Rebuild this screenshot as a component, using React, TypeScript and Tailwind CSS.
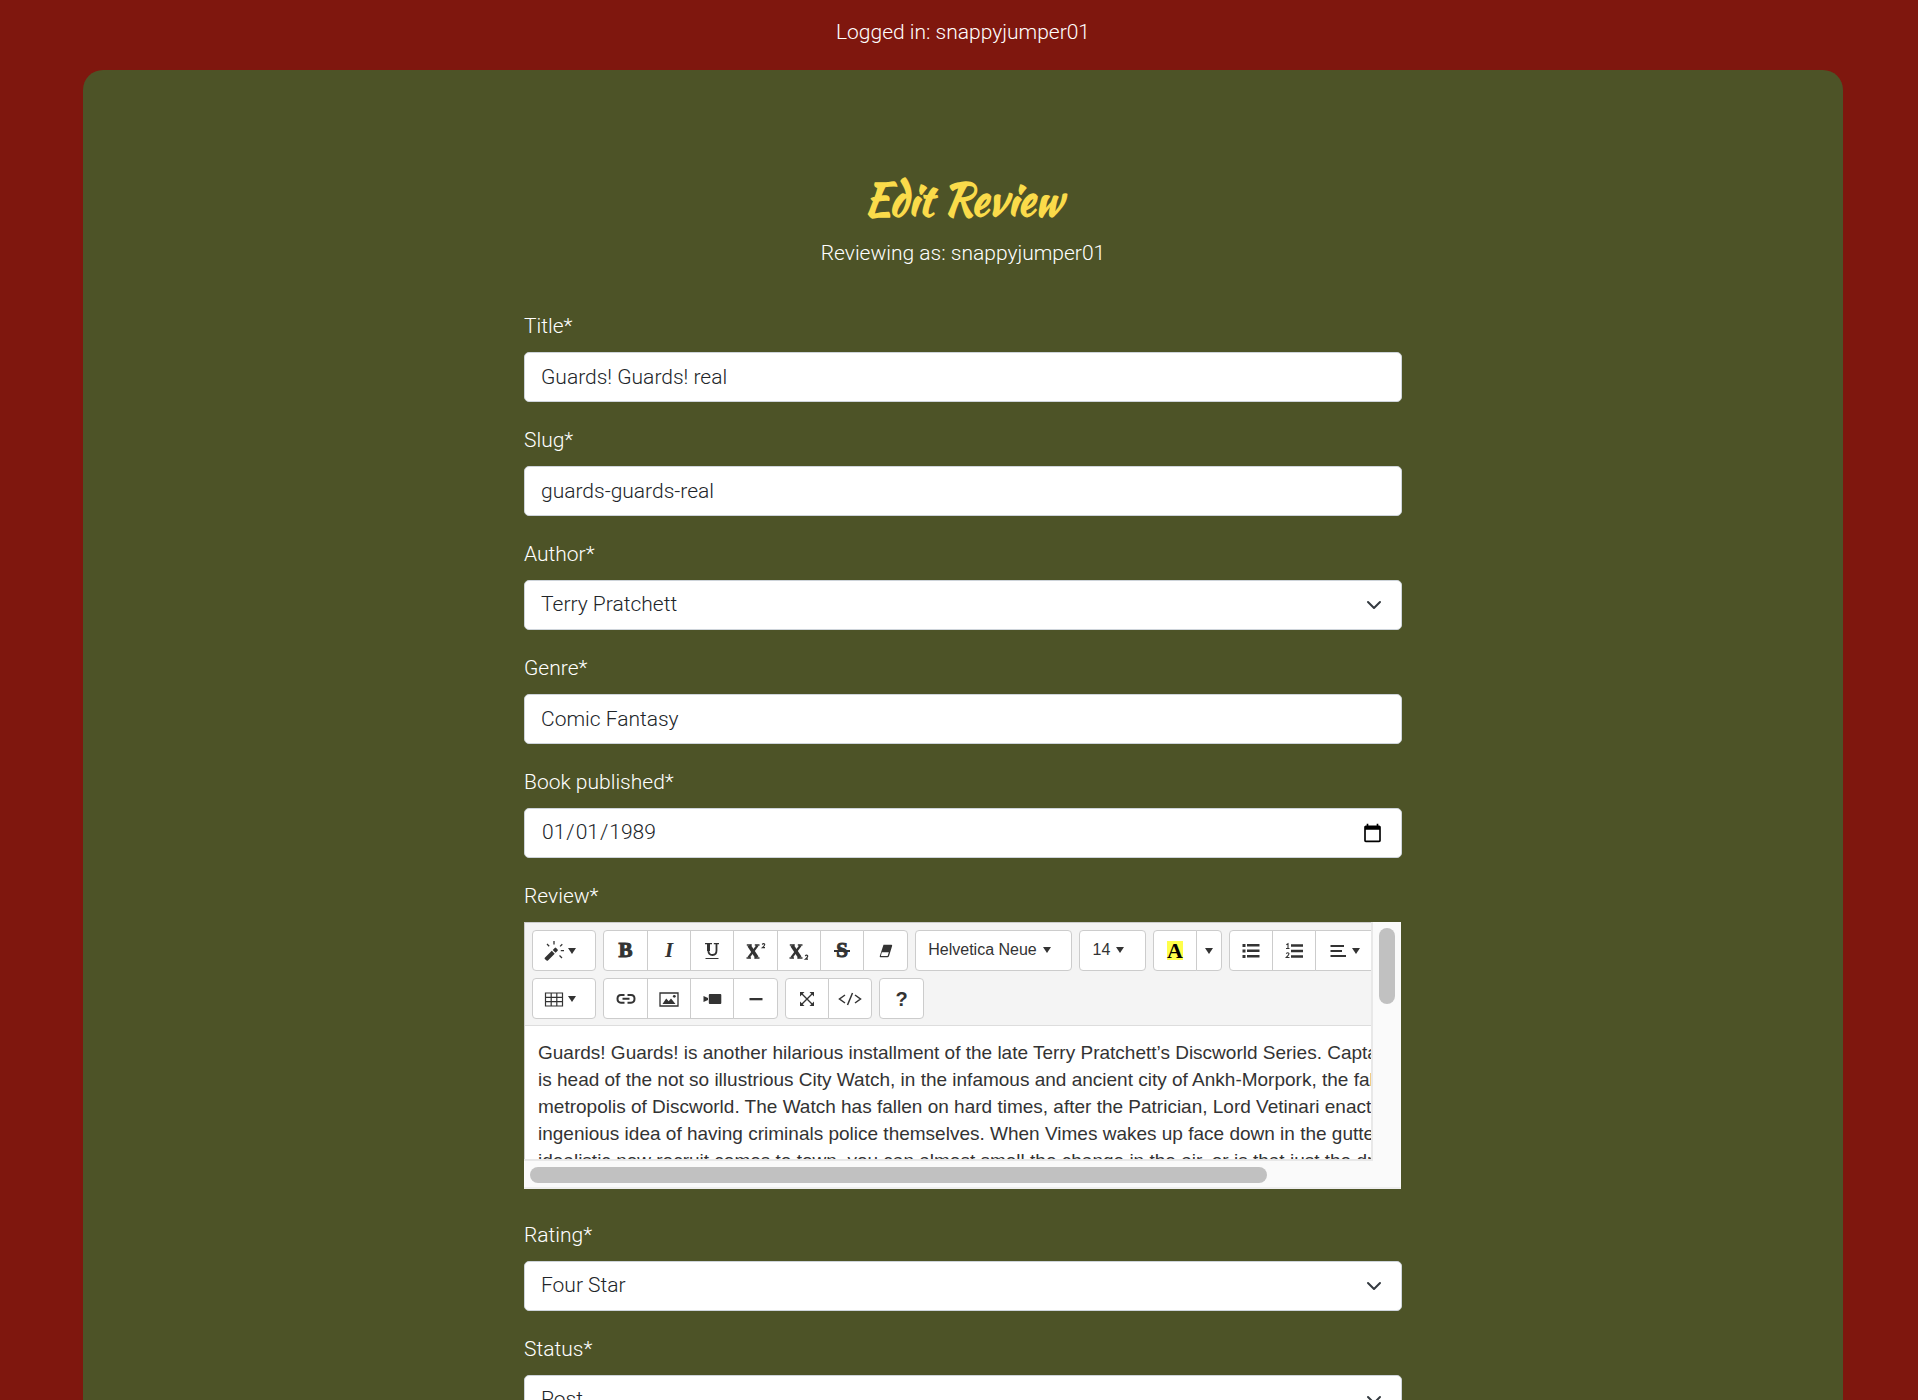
import type { ReactNode } from "react";

const control =
  "block h-[50px] w-full rounded-[5px] border border-[#ced4da] bg-white px-4 text-[21px] font-light text-[#212529] outline-none";

function Field({ id, label, children }: { id: string; label: string; children: ReactNode }) {
  return (
    <div className="mb-[21px]">
      <label htmlFor={id} className="mb-2 block leading-[35px]">
        {label}*
      </label>
      {children}
    </div>
  );
}

function SelectField({ id, label, options }: { id: string; label: string; options: string[] }) {
  return (
    <Field id={id} label={label}>
      <div className="relative">
        <select id={id} className={control + " appearance-none"} defaultValue={options[0]}>
          {options.map((o) => (
            <option key={o}>{o}</option>
          ))}
        </select>
        <svg
          viewBox="0 0 16 16"
          className="pointer-events-none absolute top-[17px] right-5 size-4"
          fill="none"
          stroke="#343a40"
          strokeWidth="2"
          strokeLinecap="round"
          strokeLinejoin="round"
        >
          <path d="m2 5 6 6 6-6" />
        </svg>
      </div>
    </Field>
  );
}

function Caret() {
  return (
    <svg viewBox="0 0 8 6" className="h-[6px] w-2 shrink-0" fill="#333">
      <path d="M0 0h8L4 6z" />
    </svg>
  );
}

function Group({ children }: { children: ReactNode }) {
  return (
    <div className="flex shrink-0 [&>button]:-ml-px [&>button:first-child]:ml-0 [&>button:first-child]:rounded-l-[4px] [&>button:last-child]:rounded-r-[4px]">
      {children}
    </div>
  );
}

function Btn({ label, width = "w-[44px]", children }: { label: string; width?: string; children: ReactNode }) {
  return (
    <button
      type="button"
      aria-label={label}
      className={
        "flex h-[41px] shrink-0 items-center justify-center border border-[#ccc] bg-white text-[#333] " + width
      }
    >
      {children}
    </button>
  );
}

function Icon({ children, size = "size-5" }: { children: ReactNode; size?: string }) {
  return (
    <svg viewBox="0 0 20 20" className={"shrink-0 " + size} fill="#333">
      {children}
    </svg>
  );
}

const serif = "font-['Liberation_Serif',serif] text-[21px] leading-none";

function LetterX() {
  return (
    <>
      <path d="m3 3.500 8 12" strokeWidth="3.600" />
      <path d="m11.500 3.500-9 12" strokeWidth="2.200" />
      <path d="M.8 3h5M8.800 3h4.700M.5 16h4.500M8.300 16h5.200" strokeWidth="1.500" />
    </>
  );
}

function Toolbar() {
  return (
    <div className="flex w-[900px] flex-col gap-[7px] border-b border-[#ddd] bg-[#f4f4f4] pt-[7px] pb-[6px] pl-[7px]">
      <div className="flex gap-[7px]">
        <Group>
          <Btn label="Style" width="w-[64px] gap-1 pr-2">
            <Icon>
              <path d="M.8 16.800 7.800 9.800l2.900 2.900-7 7q-.6.300-1.100-.200L.8 17.900q-.5-.5 0-1.100zM8.700 8.900l2-2q.7-.6 1.400 0l1.500 1.500q.6.700 0 1.400l-2 2z" />
              <path
                d="M10 0v3.500M3 3l2.200 2.200M18.300 3.200l-2.200 2.200M16.800 9.700h3.200M15.500 14.500l2.500 2.500"
                stroke="#333"
                strokeWidth="1.300"
              />
            </Icon>
            <Caret />
          </Btn>
        </Group>
        <Group>
          <Btn label="Bold" width="w-[45px]">
            <span className={serif + " font-bold [-webkit-text-stroke:1px_#333]"}>B</span>
          </Btn>
          <Btn label="Italic">
            <span className={serif + " font-bold italic"}>I</span>
          </Btn>
          <Btn label="Underline">
            <svg viewBox="0 0 16 18" className="h-[18px] w-4" fill="none" stroke="#333">
              <path d="M1 1.600h7M9.800 1.600h5.200" strokeWidth="1.400" />
              <path d="M4.500 1v8" strokeWidth="3" />
              <path d="M4.300 8.500q.2 4.500 4.200 4.500 4 0 4-4.500V1" strokeWidth="1.800" />
              <path d="M1.500 16.500h13" strokeWidth="1" />
            </svg>
          </Btn>
          <Btn label="Superscript" width="w-[45px]">
            <svg viewBox="0 0 20 18" className="h-[18px] w-5" fill="none" stroke="#333">
              <LetterX />
              <path d="M16.200 2.500q1.400-1.500 2.400-.3.600 1-2.200 3.400H19" strokeWidth="1.200" />
            </svg>
          </Btn>
          <Btn label="Subscript">
            <svg viewBox="0 0 20 18" className="h-[18px] w-5" fill="none" stroke="#333">
              <LetterX />
              <path d="M16.200 14q1.400-1.500 2.400-.3.600 1-2.200 3.400H19" strokeWidth="1.200" />
            </svg>
          </Btn>
          <Btn label="Strikethrough">
            <span className={serif + " relative font-bold [-webkit-text-stroke:1px_#333]"}>
              S
              <span className="absolute inset-x-[-2px] top-[10px] h-[2px] bg-[#333]" />
            </span>
          </Btn>
          <Btn label="Remove font style" width="w-[45px]">
            <svg viewBox="0 0 14 14" className="size-[14px]">
              <path d="M4.500.7h7.800q1.200 0 .8 1.200l-3 9.800q-.5 1.600-1.700 1.600H1.500Q.4 13.300.8 12z" fill="#333" />
              <path d="M2.800 8.200h7l-1 3.200q-.2.700-.8.700H2.600q-.8 0-.6-.7z" fill="#fff" />
            </svg>
          </Btn>
        </Group>
        <Group>
          <Btn label="Font family" width="w-[157px] gap-[6px] pr-2 pb-[2px]">
            <span className="text-[16px] whitespace-nowrap">Helvetica Neue</span>
            <Caret />
          </Btn>
        </Group>
        <Group>
          <Btn label="Font size" width="w-[67px] gap-[6px] pr-2 pb-[2px]">
            <span className="text-[16px]">14</span>
            <Caret />
          </Btn>
        </Group>
        <Group>
          <Btn label="Recent color">
            <span className="flex h-[19px] w-4 items-center justify-center bg-[#ffff4a] font-['Liberation_Serif',serif] text-[22px] leading-none font-bold text-black">
              A
            </span>
          </Btn>
          <Btn label="More colors" width="w-[26px]">
            <Caret />
          </Btn>
        </Group>
        <Group>
          <Btn label="Unordered list">
            <Icon>
              <path d="M1.500 3h3v3h-3zm4.500 0h12.500v2.500H6zM1.500 8.500h3v3h-3zm4.500 0h12.500V11H6zM1.500 14h3v3h-3zm4.500 0h12.500v2.500H6z" />
            </Icon>
          </Btn>
          <Btn label="Ordered list">
            <Icon>
              <path d="M7 3.200h12v2.500H7zm0 5.500h12v2.500H7zm0 5.500h12v2.500H7z" />
              <path
                d="M2.300 3.800 4 2.800v5M2 7.500h3.500M2.200 12.600q1.500-1.500 2.700-.3.500 1-2.600 4.200h3.200"
                fill="none"
                stroke="#333"
                strokeWidth="1.100"
              />
            </Icon>
          </Btn>
          <Btn label="Paragraph" width="w-[65px] gap-[4px] pr-2">
            <Icon>
              <path d="M2.500 4h13.500v2H2.500zm0 5H14v2H2.500zm0 5H18v2H2.500z" />
            </Icon>
            <Caret />
          </Btn>
        </Group>
      </div>
      <div className="flex gap-[7px]">
        <Group>
          <Btn label="Table" width="w-[64px] gap-1 pr-2">
            <Icon>
              <path
                d="M1.500 4h17v13h-17zM1.500 8.300h17M1.500 12.700h17M7.200 4v13M12.800 4v13"
                fill="none"
                stroke="#333"
                strokeWidth="1.200"
              />
            </Icon>
            <Caret />
          </Btn>
        </Group>
        <Group>
          <Btn label="Link" width="w-[45px]">
            <svg viewBox="0 0 20 12" className="h-3 w-5" fill="none" stroke="#333" strokeWidth="2">
              <path d="M8.500 2H5Q1.500 2 1.500 5.800T5 9.700h3.500M11.500 2H15q3.500 0 3.500 3.800T15 9.700h-3.500M6.500 5.800h7" />
            </svg>
          </Btn>
          <Btn label="Picture">
            <Icon>
              <path d="M1 4h18v13H1z" fill="none" stroke="#333" strokeWidth="1.300" />
              <path d="m3.500 15 3.700-5.500 2.500 2.700L12 9.500l4.500 5.500z" />
              <circle cx="15.300" cy="7.300" r="1.400" />
            </Icon>
          </Btn>
          <Btn label="Video">
            <Icon>
              <path d="M7.800 5h10.500q1 0 1 1v8q0 1-1 1H7.800q-1 0-1-1V6q0-1 1-1zM1.500 7l4.500 2v2l-4.500 2z" />
            </Icon>
          </Btn>
          <Btn label="Insert horizontal rule" width="w-[45px]">
            <Icon>
              <path d="M3.500 9h13v2.300h-13z" />
            </Icon>
          </Btn>
        </Group>
        <Group>
          <Btn label="Full screen">
            <svg viewBox="0 0 16 16" className="size-4" fill="#333">
              <path d="m3 3 10 10M13 3 3 13" stroke="#333" strokeWidth="1.400" />
              <path d="M1 1h4.500L1 5.500zM15 1v4.500L10.500 1zM1 15v-4.500L5.500 15zM15 15h-4.500l4.500-4.500z" />
            </svg>
          </Btn>
          <Btn label="Code view">
            <svg viewBox="0 0 24 14" className="h-[14px] w-6" fill="none" stroke="#333" strokeWidth="1.500">
              <path d="M7 3 1.500 7 7 11M17 3l5.500 4-5.500 4M14.500 1l-5 12" />
            </svg>
          </Btn>
        </Group>
        <Group>
          <Btn label="Help" width="w-[45px]">
            <span className="text-[20px] leading-none font-bold">?</span>
          </Btn>
        </Group>
      </div>
    </div>
  );
}

const reviewLines = [
  "Guards! Guards! is another hilarious installment of the late Terry Pratchett’s Discworld Series. Captai",
  "is head of the not so illustrious City Watch, in the infamous and ancient city of Ankh-Morpork, the fal",
  "metropolis of Discworld. The Watch has fallen on hard times, after the Patrician, Lord Vetinari enacte",
  "ingenious idea of having criminals police themselves. When Vimes wakes up face down in the gutter",
  "idealistic new recruit comes to town, you can almost smell the change in the air, or is that just the dr",
];

function Editor() {
  return (
    <div
      className="mr-px mb-[29px] grid h-[267px] grid-cols-[minmax(0,1fr)_30px] grid-rows-[237px_30px] bg-[#fafafa] font-['Helvetica_Neue','Liberation_Sans',Arial,sans-serif] text-[#333]"
    >
      <div className="overflow-hidden border-t border-l border-[#ccc] bg-white">
        <Toolbar />
        <div
          id="review"
          role="textbox"
          aria-multiline="true"
          aria-labelledby="review-label"
          contentEditable
          suppressContentEditableWarning
          className="w-[900px] pt-[13px] pl-[13px] text-[19px] leading-[27px] font-normal outline-none"
        >
          {reviewLines.map((line) => (
            <p key={line} className="whitespace-nowrap">
              {line}
            </p>
          ))}
        </div>
      </div>
      <div className="border-l-2 border-[#e8e8e8] px-[6px] pt-[6px]">
        <div className="h-[76px] w-4 rounded-full bg-[#c1c1c1]" />
      </div>
      <div className="col-span-2 border-b-2 border-[#eee]">
        <div className="mr-[28px] h-[2px] bg-[#e8e8e8]" />
        <div className="mt-[6px] ml-[6px] h-4 w-[84%] rounded-full bg-[#c1c1c1]" />
      </div>
    </div>
  );
}

export default function App() {
  return (
    <div className="h-screen overflow-y-auto bg-[#7f170e] pr-[75px] pl-[83px] font-[Roboto,sans-serif] text-[21px] font-light text-white [scrollbar-width:none]">
      <p className="pt-4 pb-[21px] text-center leading-[33px]">Logged in: snappyjumper01</p>
      <main className="rounded-[20px] bg-[#4d5327] pt-[102px] pb-16">
        <h1 className="text-center font-['Kaushan_Script',cursive] text-[43px] leading-[56px] font-bold text-[#fadb4a]">
          Edit Review
        </h1>
        <p className="mt-[9px] mb-[39px] text-center leading-[33px]">Reviewing as: snappyjumper01</p>
        <form className="mx-auto w-1/2 px-px">
          <Field id="title" label="Title">
            <input id="title" type="text" className={control} defaultValue="Guards! Guards! real" />
          </Field>
          <Field id="slug" label="Slug">
            <input id="slug" type="text" className={control} defaultValue="guards-guards-real" />
          </Field>
          <SelectField id="author" label="Author" options={["Terry Pratchett"]} />
          <Field id="genre" label="Genre">
            <input id="genre" type="text" className={control} defaultValue="Comic Fantasy" />
          </Field>
          <Field id="published" label="Book published">
            <input id="published" type="date" className={control} defaultValue="1989-01-01" />
          </Field>
          <label id="review-label" htmlFor="review" className="mb-2 block leading-[35px]">
            Review*
          </label>
          <Editor />
          <SelectField id="rating" label="Rating" options={["Four Star"]} />
          <SelectField id="status" label="Status" options={["Post"]} />
        </form>
      </main>
    </div>
  );
}
